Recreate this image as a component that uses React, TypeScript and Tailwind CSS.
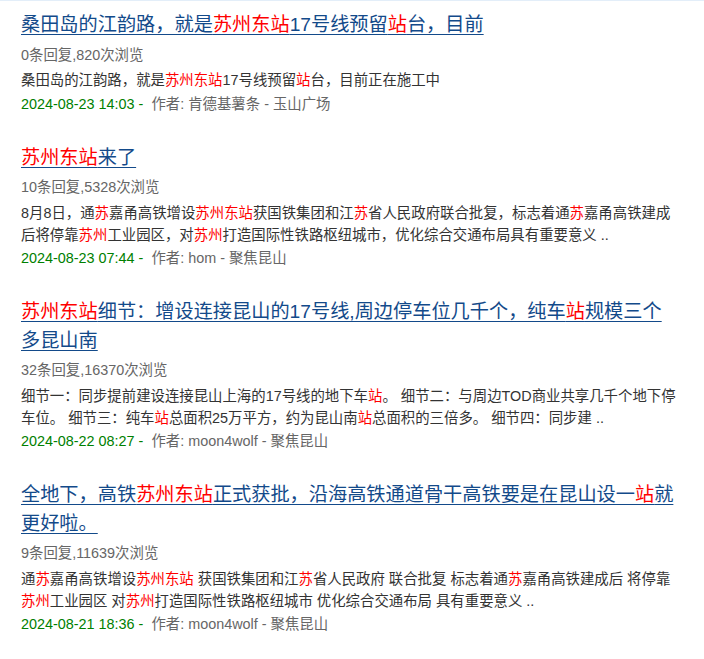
import React from "react";

type Item = {
  title: string;
  meta: string;
  desc: string;
  date: string;
  author: string;
};

const items: Item[] = [
  {
    title: "桑田岛的江韵路，就是{苏州东站}17号线预留{站}台，目前",
    meta: "0条回复,820次浏览",
    desc: "桑田岛的江韵路，就是{苏州东站}17号线预留{站}台，目前正在施工中",
    date: "2024-08-23 14:03",
    author: "作者: 肯德基薯条 - 玉山广场",
  },
  {
    title: "{苏州东站}来了",
    meta: "10条回复,5328次浏览",
    desc: "8月8日，通{苏}嘉甬高铁增设{苏州东站}获国铁集团和江{苏}省人民政府联合批复，标志着通{苏}嘉甬高铁建成后将停靠{苏州}工业园区，对{苏州}打造国际性铁路枢纽城市，优化综合交通布局具有重要意义 ..",
    date: "2024-08-23 07:44",
    author: "作者: hom - 聚焦昆山",
  },
  {
    title: "{苏州东站}细节：增设连接昆山的17号线,周边停车位几千个，纯车{站}规模三个多昆山南",
    meta: "32条回复,16370次浏览",
    desc: "细节一：同步提前建设连接昆山上海的17号线的地下车{站}。 细节二：与周边TOD商业共享几千个地下停车位。 细节三：纯车{站}总面积25万平方，约为昆山南{站}总面积的三倍多。 细节四：同步建 ..",
    date: "2024-08-22 08:27",
    author: "作者: moon4wolf - 聚焦昆山",
  },
  {
    title: "全地下，高铁{苏州东站}正式获批，沿海高铁通道骨干高铁要是在昆山设一{站}就更好啦。",
    meta: "9条回复,11639次浏览",
    desc: "通{苏}嘉甬高铁增设{苏州东站} 获国铁集团和江{苏}省人民政府 联合批复 标志着通{苏}嘉甬高铁建成后 将停靠{苏州}工业园区 对{苏州}打造国际性铁路枢纽城市 优化综合交通布局 具有重要意义 ..",
    date: "2024-08-21 18:36",
    author: "作者: moon4wolf - 聚焦昆山",
  },
];

function Rich({ text }: { text: string }) {
  const parts = text.split(/(\{[^}]*\})/);
  return (
    <>
      {parts.map((p, i) =>
        p.startsWith("{") ? (
          <span key={i} className="text-[#ff0000]">
            {p.slice(1, -1)}
          </span>
        ) : (
          <React.Fragment key={i}>{p}</React.Fragment>
        )
      )}
    </>
  );
}

export default function App() {
  return (
    <div
      className="min-h-[659px] w-[704px] bg-white border-t border-[#e3eef9]"
      style={{ fontFamily: '"Liberation Sans", Arial, "Noto Sans CJK SC", sans-serif' }}
    >
      <div className="pl-[21px] pr-[24px] pt-[10px] flex flex-col gap-[28px]">
        {items.map((it, i) => (
          <div key={i} className="flex flex-col">
            <a
              href="#"
              className="text-[19.2px] leading-[28.8px] text-[#134a8a] underline underline-offset-[3px] decoration-[1px]"
            >
              <Rich text={it.title} />
            </a>
            <div className="mt-[5px] text-[14.4px] leading-[21.6px] text-[#666666]">{it.meta}</div>
            <div className="mt-[4px] text-[14.4px] leading-[21.6px] text-[#333333]">
              <Rich text={it.desc} />
            </div>
            <div className="mt-[2px] text-[14.4px] leading-[21.6px] text-[#666666] whitespace-pre">
              <span className="text-[#008000]">{it.date} - </span>
              {" "}
              {it.author}
            </div>
          </div>
        ))}
      </div>
    </div>
  );
}
